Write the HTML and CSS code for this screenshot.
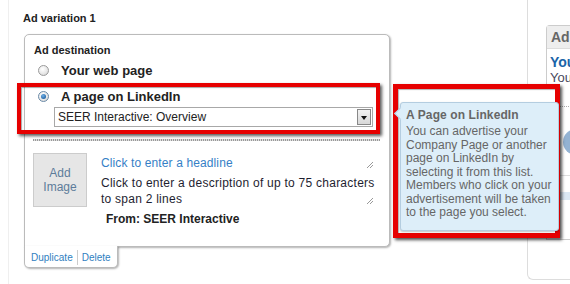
FILE: index.html
```html
<!DOCTYPE html>
<html lang="en">
<head>
  <meta charset="UTF-8" />
  <title>Ad variation</title>
  <link rel="stylesheet" href="styles.css">
</head>
<body>
  <div class="page">
    <div class="main">
      <h3 class="variation-title">Ad variation 1</h3>

      <div class="card">
        <div class="card-label">Ad destination</div>
        <div class="radio-row first">
          <span class="radio"></span>
          <span class="radio-text">Your web page</span>
        </div>

        <div class="highlight">
          <div class="radio-row">
            <span class="radio checked"></span>
            <span class="radio-text">A page on LinkedIn</span>
          </div>
          <div class="select">
            <span class="select-value">SEER Interactive: Overview</span>
            <span class="select-btn"></span>
          </div>
        </div>

        <div class="divider"></div>

        <div class="preview">
          <div class="add-image">Add<br>Image</div>
          <div class="fields">
            <div class="field headline">
              Click to enter a headline
              <svg class="grip" width="8" height="8" viewBox="0 0 8 8"><path d="M1 7L7 1M4 7L7 4" stroke="#999" stroke-width="1"/></svg>
            </div>
            <div class="field description">
              Click to enter a description of up to 75 characters to span 2 lines
              <svg class="grip" width="8" height="8" viewBox="0 0 8 8"><path d="M1 7L7 1M4 7L7 4" stroke="#999" stroke-width="1"/></svg>
            </div>
            <div class="from">From: SEER Interactive</div>
          </div>
        </div>
      </div>
      <div class="card-tab">
        <a href="#">Duplicate</a><span class="sep"></span><a href="#">Delete</a>
      </div>
    </div>

    <div class="side">
      <div class="ads-panel">
        <div class="ads-head">Ads</div>
        <div class="ads-body">
          <div class="ads-title">You</div>
          <div class="ads-text">You</div>
          <div class="ads-line dotted"></div>
          <div class="ads-bubble"></div>
          <div class="ads-line"></div>
          <div class="ads-band"></div>
        </div>
      </div>
    </div>

    <div class="tip-mark">
      <div class="tip">
        <div class="tip-title">A Page on LinkedIn</div>
        <div class="tip-text">You can advertise your Company Page or another page on LinkedIn by selecting it from this list. Members who click on your advertisement will be taken to the page you select.</div>
      </div>
    </div>
  </div>
</body>
</html>
```

FILE: styles.css
```css
* { box-sizing: border-box; }
body {
  margin: 0;
  background: #fff;
  color: #222;
  font-family: "Liberation Sans", Arial, sans-serif;
  font-size: 12px;
}
a { text-decoration: none; }

.page {
  position: relative;
  display: flex;
  width: 570px;
  height: 284px;
  overflow: hidden;
}
.main {
  flex: 0 0 519px;
  margin-left: 8px;
  border-left: 1px solid #efefef;
  padding: 11px 0 0 15px;
}
.variation-title {
  margin: 0 0 9px -1px;
  font-size: 11px;
  line-height: 14px;
  font-weight: bold;
  color: #222;
}

/* card */
.card {
  width: 366px;
  border: 1px solid #bbb;
  border-radius: 5px 5px 5px 0;
  padding: 8px 9px 19px 9px;
  box-shadow: 1px 1px 2px rgba(0,0,0,.3);
  background: #fff;
}
.card-label {
  font-size: 11px;
  line-height: 14px;
  font-weight: bold;
}
.radio-row {
  display: flex;
  align-items: center;
  height: 18px;
}
.radio-row.first { margin: 4px 0 0 4px; }
.radio {
  width: 11px;
  height: 11px;
  border-radius: 50%;
  border: 1px solid #9a9a9a;
  background: radial-gradient(circle at 40% 35%, #fff 0%, #e6e6e6 60%, #c8c8c8 100%);
  margin-right: 12px;
  position: relative;
}
.radio.checked { border-color: #6a8aa8; }
.radio.checked::after {
  content: "";
  position: absolute;
  left: 2px;
  top: 2px;
  width: 5px;
  height: 5px;
  border-radius: 50%;
  background: radial-gradient(circle at 40% 35%, #6fb0e8 0%, #1d5e9e 80%);
}
.radio-text {
  font-size: 13px;
  font-weight: bold;
  color: #222;
}

.highlight {
  margin: 4px 0 0 -17px;
  border: 4px solid #e60000;
  padding: 0 3px 3px 17px;
  box-shadow: 2px 2px 3px rgba(0,0,0,.65), inset 1px 1px 1px rgba(0,0,0,.35);
}
.select {
  display: flex;
  align-items: center;
  justify-content: space-between;
  height: 20px;
  margin: 2px 0 0 16px;
  border: 1px solid #a8a8a8;
  padding: 0 1px 0 3px;
  background: #fff;
}
.select-value { font-size: 12px; color: #222; }
.select-btn {
  width: 14px;
  height: 16px;
  border: 1px solid #888;
  background: linear-gradient(#f2f2f2, #d8d8d8);
  position: relative;
}
.select-btn::after {
  content: "";
  position: absolute;
  left: 3px;
  top: 6px;
  border-left: 3px solid transparent;
  border-right: 3px solid transparent;
  border-top: 4px solid #111;
}

.divider {
  height: 2px;
  margin: 5px 0 0 -1px;
  background: repeating-linear-gradient(90deg, #999 0 1px, #ddd 1px 2px);
}

.preview {
  display: flex;
  margin: 12px 0 0 -1px;
}
.add-image {
  flex: 0 0 54px;
  height: 54px;
  margin-right: 14px;
  border: 1px solid #ccc;
  background: #e6e6e6;
  color: #5d7c9a;
  text-align: center;
  line-height: 14px;
  padding-top: 12px;
}
.fields {
  flex: 1;
  padding-top: 2px;
}
.field { position: relative; line-height: 16px; }
.headline { color: #3580c6; letter-spacing: .12px; }
.description {
  margin-top: 4px;
  color: #1e1e30;
  letter-spacing: .25px;
}
.grip { position: absolute; right: 6px; bottom: 2px; }
.from {
  margin-top: 4px;
  padding-left: 5px;
  font-weight: bold;
  line-height: 16px;
}

.card-tab {
  width: 94px;
  height: 22px;
  margin-top: -1px;
  border: 1px solid #bbb;
  border-top: none;
  border-radius: 0 0 5px 5px;
  background: #fff;
  box-shadow: 1px 1px 2px rgba(0,0,0,.3);
  display: flex;
  align-items: center;
  padding: 2px 0 0 6px;
  font-size: 10px;
}
.card-tab a { color: #2f7fc1; }
.sep {
  width: 1px;
  height: 15px;
  background: #ccc;
  margin: 0 4px;
}

/* right column */
.side {
  flex: 1;
  height: 280px;
  border-left: 1px solid #ddd;
  border-bottom: 1px solid #ddd;
  border-bottom-left-radius: 6px;
  padding: 25px 0 0 18px;
}
.ads-panel {
  height: 215px;
  border: 1px solid #ccc;
  border-right: none;
  border-radius: 4px 0 0 0;
}
.ads-head {
  height: 23px;
  background: #eee;
  border-bottom: 1px solid #ddd;
  padding-left: 4px;
  font-size: 14px;
  font-weight: bold;
  line-height: 22px;
  color: #666;
}
.ads-body { padding: 5px 0 0 3px; }
.ads-title { font-size: 14px; font-weight: bold; color: #1a64a8; line-height: 16px; }
.ads-text { font-size: 13px; color: #4a4a60; line-height: 16px; }
.ads-line { height: 1px; background: #ddd; margin-top: 20px; }
.ads-line.dotted { background: repeating-linear-gradient(90deg, #aaa 0 1px, transparent 1px 2px); }
.ads-bubble {
  width: 26px;
  height: 26px;
  margin: 22px 0 0 13px;
  border-radius: 50%;
  background: #93b2d2;
}
.ads-band { height: 8px; margin-top: 16px; background: #dbe8f4; }

/* tooltip callout, drawn over the side column */
.tip-mark {
  position: absolute;
  left: 393px;
  top: 84px;
  width: 167px;
  height: 154px;
  border: 5px solid #e60000;
  box-shadow: 2px 2px 3px rgba(0,0,0,.7), inset 1px 1px 1px rgba(0,0,0,.3);
  padding: 13px 0 2px 2px;
  background: #fff;
}
.tip {
  position: relative;
  height: 100%;
  margin-right: -4px;
  background: #ddeef9;
  border: 1px solid #b4cde0;
  border-radius: 3px;
  box-shadow: 0 1px 2px rgba(0,0,0,.25);
  padding: 5px 4px 0 5px;
  color: #666;
}
.tip::before {
  content: "";
  position: absolute;
  left: -5px;
  top: 6px;
  width: 8px;
  height: 8px;
  background: #ddeef9;
  border-left: 1px solid #b4cde0;
  border-bottom: 1px solid #b4cde0;
  transform: rotate(45deg);
}
.tip-title {
  font-weight: bold;
  line-height: 14px;
  letter-spacing: .1px;
}
.tip-text {
  margin-top: 3px;
  line-height: 13.5px;
}
```
